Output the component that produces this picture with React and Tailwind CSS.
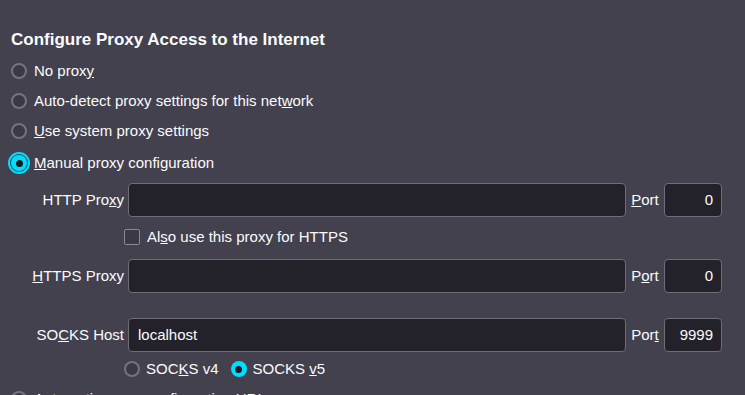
import React from "react";

const Radio = ({ checked, focused }) => (
  <span
    className={
      "flex shrink-0 items-center justify-center rounded-full w-[16px] h-[16px] " +
      (checked ? "bg-[#00ddff] " : "border-2 border-[#75747c] bg-[#3a3944] ") +
      (focused ? "outline-2 outline-offset-1 outline-[#00ddff]" : "")
    }
  >
    {checked && <span className="block w-[7px] h-[7px] rounded-full bg-[#1c1b22]" />}
  </span>
);

const RadioRow = ({ checked, focused, children, className = "" }) => (
  <div className={"flex items-center gap-[7px] h-[30px] pl-[11px] " + className}>
    <Radio checked={checked} focused={focused} />
    <span>{children}</span>
  </div>
);

const Field = ({ label, value, port, portLabel }) => (
  <div className="flex items-center h-[34px]">
    <span className="shrink-0 w-[128px] pr-[4px] text-right">{label}</span>
    <div className="shrink-0 w-[498px] h-[34px] flex items-center px-[9px] rounded-[4px] border border-[#6f6e77] bg-[#23222b]">
      {value}
    </div>
    <span className="shrink-0 w-[38px] text-center">{portLabel}</span>
    <div className="shrink-0 w-[58px] h-[34px] flex items-center justify-end px-[8px] rounded-[4px] border border-[#6f6e77] bg-[#23222b]">
      {port}
    </div>
  </div>
);

export default function App() {
  return (
    <div
      className="w-[745px] h-[395px] overflow-hidden bg-[#42414d] text-[#fbfbfe] text-[15px]"
      style={{ fontFamily: '"Liberation Sans", Arial, sans-serif' }}
    >
      <div className="pt-[30px] pl-[11px] h-[50px] leading-[20px] text-[17px] font-bold">
        Configure Proxy Access to the Internet
      </div>
      <div className="mt-[6px]">
        <RadioRow>No prox<u>y</u></RadioRow>
        <RadioRow>Auto-detect proxy settings for this net<u>w</u>ork</RadioRow>
        <RadioRow><u>U</u>se system proxy settings</RadioRow>
        <RadioRow checked focused className="mt-[2px]"><u>M</u>anual proxy configuration</RadioRow>
      </div>
      <div className="mt-[5px]">
        <Field label={<>HTTP Pro<u>x</u>y</>} portLabel={<><u>P</u>ort</>} port="0" />
        <div className="flex items-center gap-[7px] h-[30px] mt-[5px] pl-[124px]">
          <span className="w-[16px] h-[16px] rounded-[2px] border border-[#8a8991] bg-[#3a3944]" />
          <span>Al<u>s</u>o use this proxy for HTTPS</span>
        </div>
        <div className="mt-[7px]">
          <Field label={<><u>H</u>TTPS Proxy</>} portLabel={<>P<u>o</u>rt</>} port="0" />
        </div>
        <div className="mt-[25px]">
          <Field label={<>SO<u>C</u>KS Host</>} value="localhost" portLabel={<>Por<u>t</u></>} port="9999" />
        </div>
        <div className="flex items-center h-[30px] mt-[2px] pl-[124px]">
          <Radio />
          <span className="ml-[6px]">SOC<u>K</u>S v4</span>
          <span className="ml-[12px]"><Radio checked /></span>
          <span className="ml-[6px]">SOCKS <u>v</u>5</span>
        </div>
        <RadioRow>Automatic proxy configuration URL</RadioRow>
      </div>
    </div>
  );
}
